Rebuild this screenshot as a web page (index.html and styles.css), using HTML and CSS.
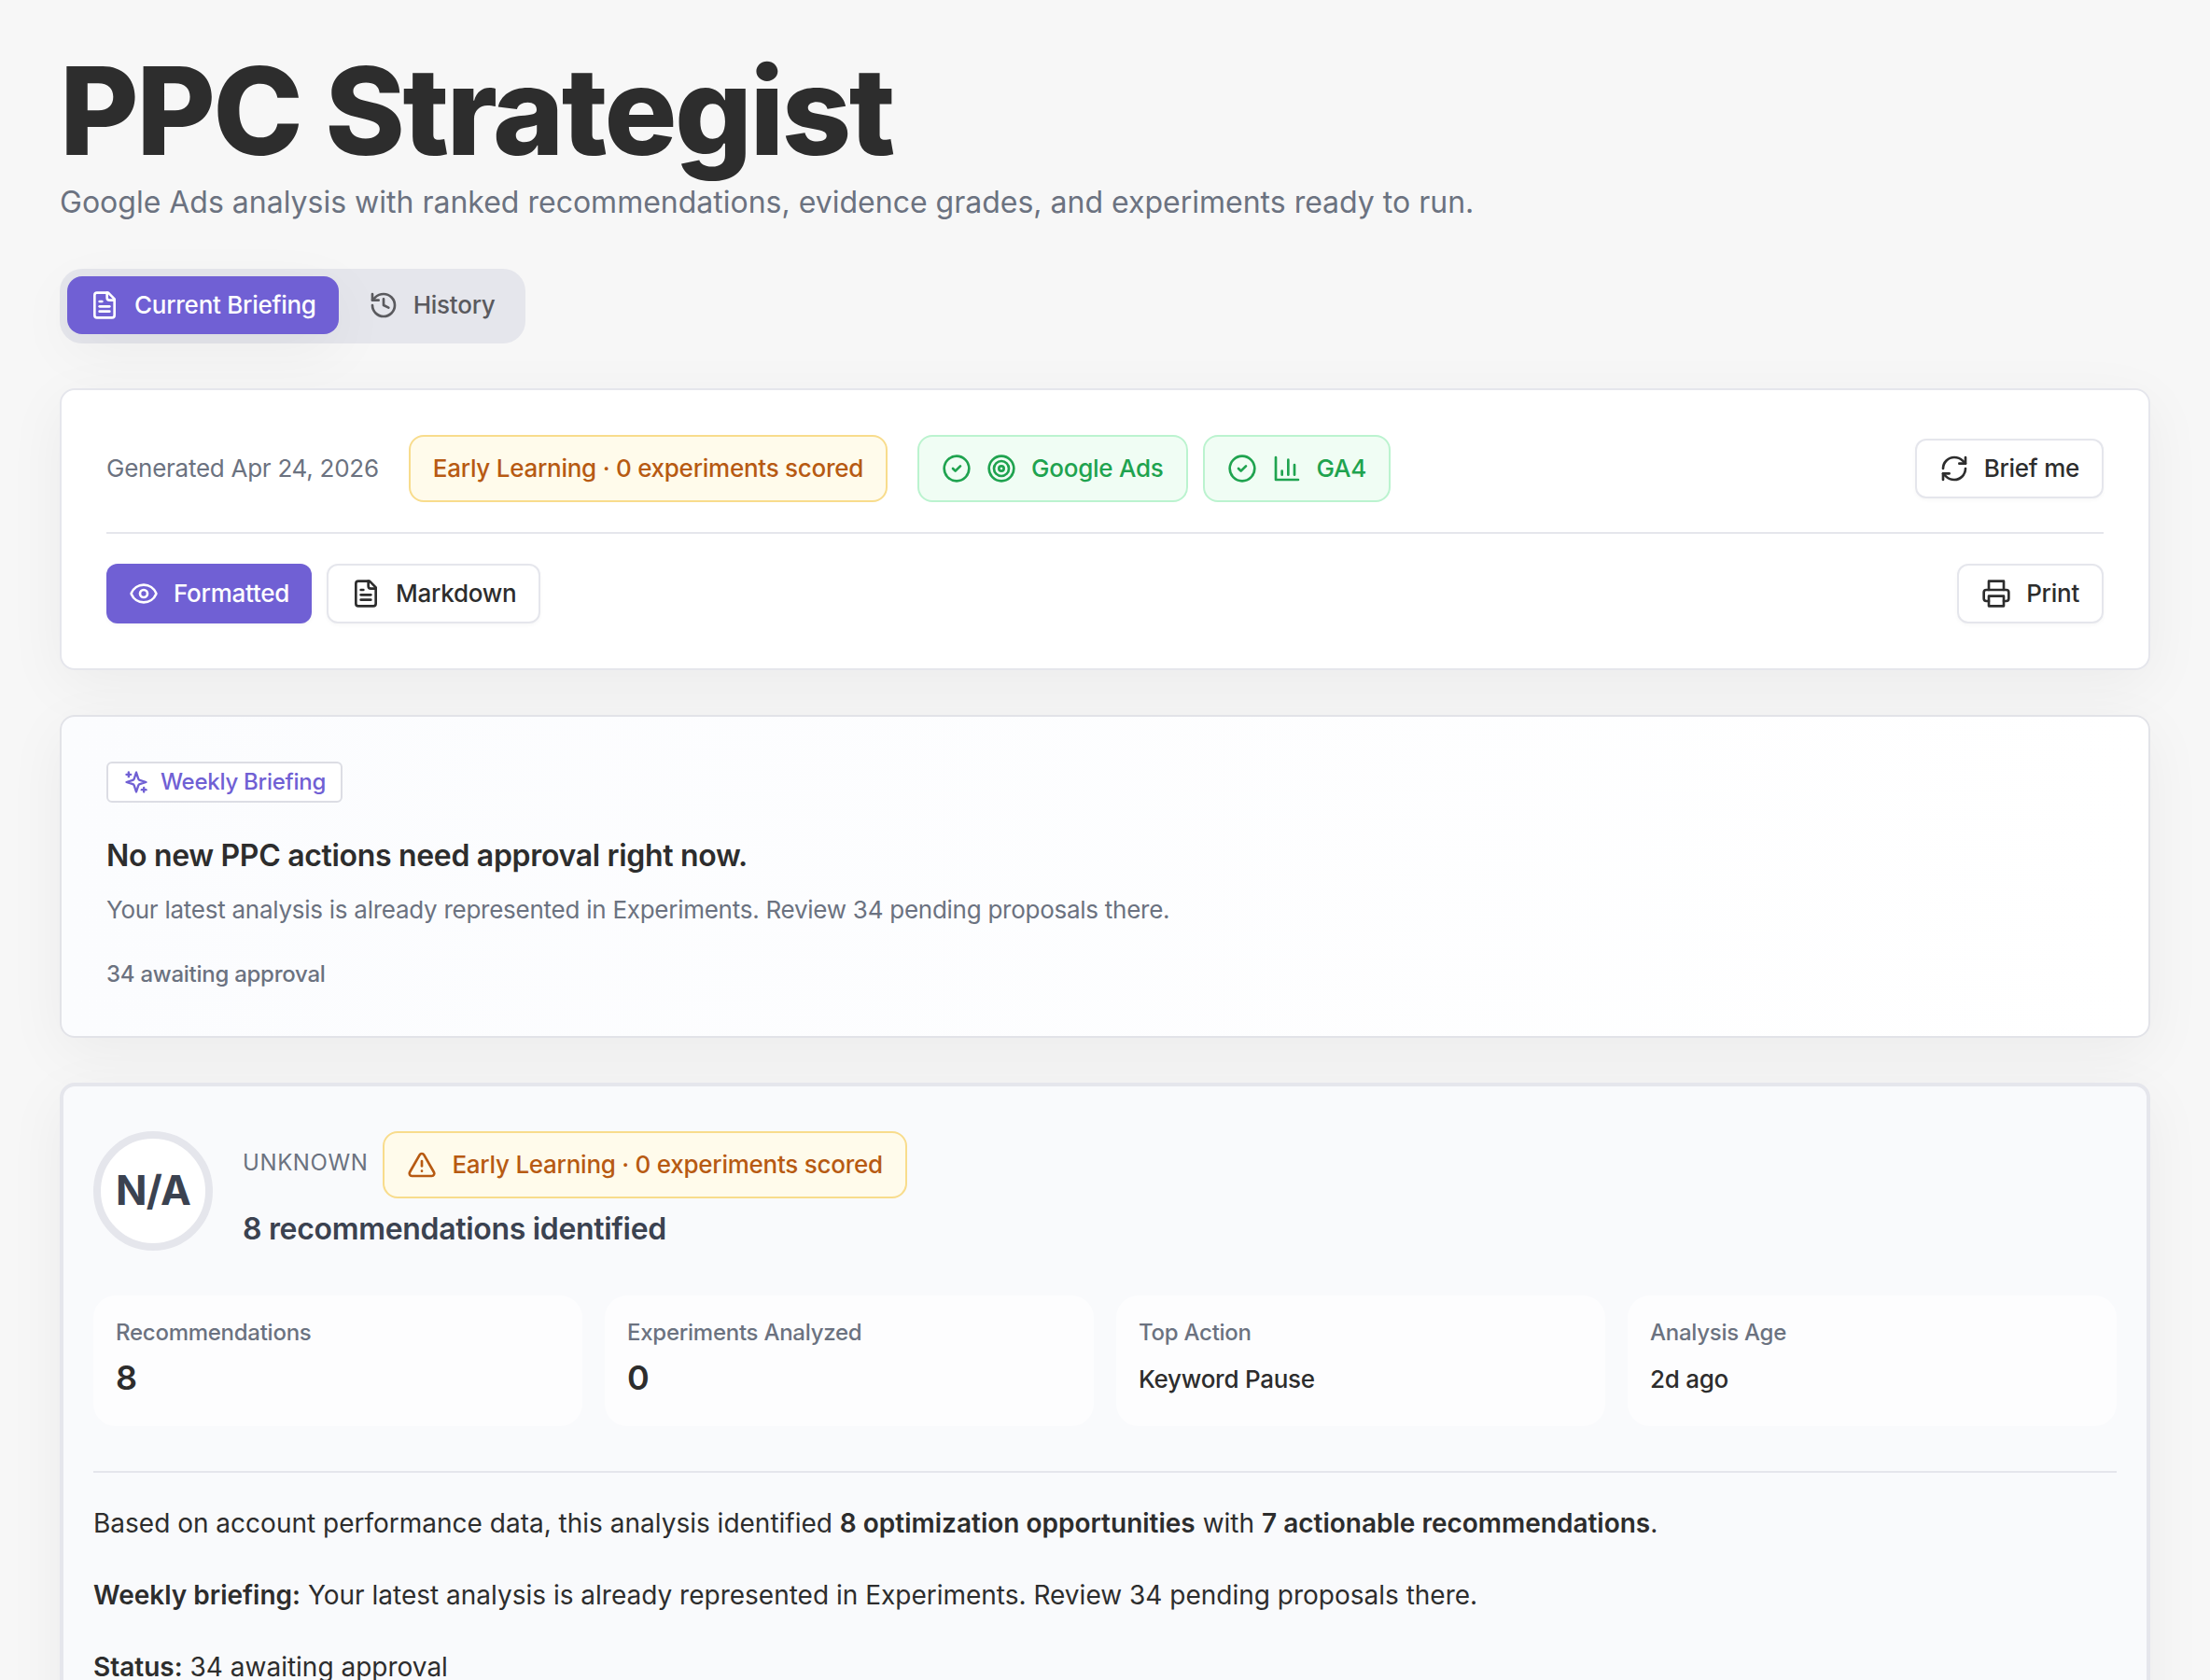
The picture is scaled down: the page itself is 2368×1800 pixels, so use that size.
FILE: index.html
```html
<!DOCTYPE html>
<html lang="en">
<head>
<meta charset="utf-8">
<meta name="viewport" content="width=device-width, initial-scale=1">
<title>PPC Strategist</title>
<link rel="stylesheet" href="styles.css">
</head>
<body>
<svg class="sprite" aria-hidden="true">
  <symbol id="i-file" viewBox="0 0 24 24"><path d="M15 2H6a2 2 0 0 0-2 2v16a2 2 0 0 0 2 2h12a2 2 0 0 0 2-2V7Z"/><path d="M14 2v4a2 2 0 0 0 2 2h4"/><path d="M10 9H8"/><path d="M16 13H8"/><path d="M16 17H8"/></symbol>
  <symbol id="i-history" viewBox="0 0 24 24"><path d="M3 12a9 9 0 1 0 9-9 9.75 9.75 0 0 0-6.74 2.74L3 8"/><path d="M3 3v5h5"/><path d="M12 7v5l4 2"/></symbol>
  <symbol id="i-check" viewBox="0 0 24 24"><circle cx="12" cy="12" r="10"/><path d="m9 12 2 2 4-4"/></symbol>
  <symbol id="i-target" viewBox="0 0 24 24"><circle cx="12" cy="12" r="10"/><circle cx="12" cy="12" r="6"/><circle cx="12" cy="12" r="2"/></symbol>
  <symbol id="i-chart" viewBox="0 0 24 24"><path d="M3 3v18h18"/><path d="M18 17V9"/><path d="M13 17V5"/><path d="M8 17v-3"/></symbol>
  <symbol id="i-refresh" viewBox="0 0 24 24"><path d="M3 12a9 9 0 0 1 9-9 9.75 9.75 0 0 1 6.74 2.74L21 8"/><path d="M21 3v5h-5"/><path d="M21 12a9 9 0 0 1-9 9 9.75 9.75 0 0 1-6.74-2.74L3 16"/><path d="M8 16H3v5"/></symbol>
  <symbol id="i-eye" viewBox="0 0 24 24"><path d="M2.062 12.348a1 1 0 0 1 0-.696 10.75 10.75 0 0 1 19.876 0 1 1 0 0 1 0 .696 10.75 10.75 0 0 1-19.876 0"/><circle cx="12" cy="12" r="3"/></symbol>
  <symbol id="i-print" viewBox="0 0 24 24"><path d="M6 18H4a2 2 0 0 1-2-2v-5a2 2 0 0 1 2-2h16a2 2 0 0 1 2 2v5a2 2 0 0 1-2 2h-2"/><path d="M6 9V2h12v7"/><path d="M6 14h12v8H6z"/></symbol>
  <symbol id="i-sparkles" viewBox="0 0 24 24"><path d="m12 3-1.912 5.813a2 2 0 0 1-1.275 1.275L3 12l5.813 1.912a2 2 0 0 1 1.275 1.275L12 21l1.912-5.813a2 2 0 0 1 1.275-1.275L21 12l-5.813-1.912a2 2 0 0 1-1.275-1.275L12 3Z"/><path d="M5 3v4"/><path d="M19 17v4"/><path d="M3 5h4"/><path d="M17 19h4"/></symbol>
  <symbol id="i-warning" viewBox="0 0 24 24"><path d="m21.73 18-8-14a2 2 0 0 0-3.48 0l-8 14A2 2 0 0 0 4 21h16a2 2 0 0 0 1.73-3"/><path d="M12 9v4"/><path d="M12 17h.01"/></symbol>
</svg>
<main class="page">
  <header class="page-header">
    <h1 class="title">PPC Strategist</h1>
    <p class="subtitle">Google Ads analysis with ranked recommendations, evidence grades, and experiments ready to run.</p>
  </header>

  <nav class="tabs" aria-label="Briefing views">
    <button class="tab tab-active" type="button"><svg class="icon"><use href="#i-file"/></svg>Current Briefing</button>
    <button class="tab" type="button"><svg class="icon"><use href="#i-history"/></svg>History</button>
  </nav>

  <section class="card">
    <div class="bar bar-top">
      <span class="generated">Generated Apr 24, 2026</span>
      <span class="badge badge-amber">Early Learning · 0 experiments scored</span>
      <div class="sources">
        <span class="badge badge-green"><svg class="icon"><use href="#i-check"/></svg><svg class="icon"><use href="#i-target"/></svg>Google Ads</span>
        <span class="badge badge-green"><svg class="icon"><use href="#i-check"/></svg><svg class="icon"><use href="#i-chart"/></svg>GA4</span>
      </div>
      <button class="btn push" type="button"><svg class="icon"><use href="#i-refresh"/></svg>Brief me</button>
    </div>
    <div class="bar bar-bottom">
      <button class="btn btn-primary" type="button"><svg class="icon"><use href="#i-eye"/></svg>Formatted</button>
      <button class="btn" type="button"><svg class="icon"><use href="#i-file"/></svg>Markdown</button>
      <button class="btn push" type="button"><svg class="icon"><use href="#i-print"/></svg>Print</button>
    </div>
  </section>

  <section class="card briefing">
    <span class="label"><svg class="icon icon-small"><use href="#i-sparkles"/></svg>Weekly Briefing</span>
    <h2 class="heading">No new PPC actions need approval right now.</h2>
    <p class="summary">Your latest analysis is already represented in Experiments. Review 34 pending proposals there.</p>
    <p class="awaiting">34 awaiting approval</p>
  </section>

  <section class="card report">
    <div class="grade-row">
      <div class="grade">N/A</div>
      <div class="grade-text">
        <div class="status-row">
          <span class="status">UNKNOWN</span>
          <span class="badge badge-amber"><svg class="icon"><use href="#i-warning"/></svg>Early Learning · 0 experiments scored</span>
        </div>
        <h2 class="heading heading-slate">8 recommendations identified</h2>
      </div>
    </div>
    <dl class="stats">
      <div class="stat"><dt class="stat-name">Recommendations</dt><dd class="stat-value">8</dd></div>
      <div class="stat"><dt class="stat-name">Experiments Analyzed</dt><dd class="stat-value">0</dd></div>
      <div class="stat"><dt class="stat-name">Top Action</dt><dd class="stat-value stat-words">Keyword Pause</dd></div>
      <div class="stat"><dt class="stat-name">Analysis Age</dt><dd class="stat-value stat-words">2d ago</dd></div>
    </dl>
    <div class="prose">
      <p>Based on account performance data, this analysis identified <strong>8 optimization opportunities</strong> with <strong>7 actionable recommendations</strong>.</p>
      <p><strong>Weekly briefing:</strong> Your latest analysis is already represented in Experiments. Review 34 pending proposals there.</p>
      <p><strong>Status:</strong> 34 awaiting approval</p>
    </div>
  </section>
</main>
</body>
</html>
```
FILE: styles.css
```css
:root {
  --ink: #2d2d2d;
  --muted: #6b7280;
  --slate: #3b4250;
  --line: #e5e6ec;
  --accent: #7060d4;
}

* { box-sizing: border-box; }

body {
  margin: 0;
  background: #f7f7f7;
  color: var(--ink);
  font-family: Inter, "Liberation Sans", sans-serif;
  font-size: 26px;
  line-height: 40px;
  letter-spacing: -0.01em;
}

h1, h2, p, dl, dd { margin: 0; }

.sprite { display: none; }

.icon {
  width: 32px;
  height: 32px;
  flex: none;
  fill: none;
  stroke: currentColor;
  stroke-width: 2;
  stroke-linecap: round;
  stroke-linejoin: round;
}

.icon-small { width: 28px; height: 28px; }

.page {
  display: flex;
  flex-direction: column;
  gap: 48px;
  padding: 48px 64px;
}

.title {
  font-size: 130px;
  font-weight: 800;
  line-height: 142px;
  letter-spacing: -0.02em;
}

.subtitle {
  margin-top: 4px;
  color: var(--muted);
  font-size: 32px;
  line-height: 46px;
  letter-spacing: normal;
}

.tabs {
  display: flex;
  align-self: flex-start;
  gap: 8px;
  padding: 8px 8px 10px;
  border-radius: 24px;
  background: var(--line);
}

.tab {
  display: flex;
  align-items: center;
  gap: 16px;
  height: 62px;
  padding: 0 24px;
  border: 0;
  border-radius: 16px;
  background: none;
  color: #5a5a5e;
  font: inherit;
  font-weight: 500;
  letter-spacing: inherit;
}

.tab-active {
  background: var(--accent);
  color: #fff;
  box-shadow: 0 16px 64px rgba(0, 0, 0, 0.05);
}

.card {
  padding: 48px;
  border: 2px solid var(--line);
  border-radius: 16px;
  background: #fff;
  box-shadow: 0 16px 64px rgba(0, 0, 0, 0.05);
}

.bar {
  display: flex;
  align-items: center;
}

.bar-top {
  gap: 32px;
  padding-bottom: 32px;
  border-bottom: 2px solid var(--line);
}

.bar-bottom { gap: 16px; padding-top: 32px; }

.push { margin-left: auto; }

.generated { color: var(--muted); }

.sources { display: flex; gap: 16px; }

.badge {
  display: flex;
  align-items: center;
  gap: 16px;
  height: 72px;
  padding: 0 24px;
  border: 2px solid;
  border-radius: 16px;
  font-weight: 500;
}

.badge-amber { background: #fffbeb; border-color: #f8dc8c; color: #b75a12; }
.badge-green { background: #f0fdf4; border-color: #bbf3cf; color: #1fa34f; }

.btn {
  display: flex;
  align-items: center;
  gap: 16px;
  height: 64px;
  padding: 0 24px;
  border: 2px solid var(--line);
  border-radius: 12px;
  background: #fff;
  color: var(--ink);
  font: inherit;
  font-weight: 500;
  letter-spacing: inherit;
  box-shadow: 0 2px 4px rgba(0, 0, 0, 0.03);
}

.btn-primary {
  border: 0;
  background: var(--accent);
  color: #fff;
}

.briefing {
  display: flex;
  flex-direction: column;
  align-items: flex-start;
  border-color: #e2e3e8;
  background: linear-gradient(90deg, #fbfcfe, #fff);
}

.label {
  display: flex;
  align-items: center;
  gap: 12px;
  height: 44px;
  padding: 0 16px;
  border: 2px solid #dcdde4;
  border-radius: 6px;
  background: #fff;
  color: var(--accent);
  font-size: 24px;
  font-weight: 500;
}

.heading {
  font-size: 32px;
  font-weight: 600;
  line-height: 46px;
  letter-spacing: -0.01em;
}

.heading-slate { color: var(--slate); }

.briefing .heading { margin-top: 34px; }

.summary {
  margin-top: 12px;
  color: var(--muted);
  line-height: 46px;
}

.awaiting {
  margin-top: 28px;
  color: var(--muted);
  font-size: 24px;
  font-weight: 500;
  line-height: 36px;
}

.report {
  padding: 48px 32px;
  border-width: 4px;
  background: #f9fafc;
}

.grade-row {
  display: flex;
  align-items: center;
  gap: 32px;
}

.grade {
  display: flex;
  align-items: center;
  justify-content: center;
  width: 128px;
  height: 128px;
  padding-bottom: 2px;
  border: 8px solid var(--line);
  border-radius: 50%;
  background: #fff;
  color: var(--slate);
  font-size: 44px;
  font-weight: 700;
  letter-spacing: -0.02em;
}

.grade-text {
  display: flex;
  flex-direction: column;
  gap: 10px;
}

.status-row {
  display: flex;
  align-items: center;
  gap: 16px;
}

.status {
  padding-bottom: 4px;
  color: var(--muted);
  font-size: 24px;
  letter-spacing: 0.025em;
}

.stats {
  display: grid;
  grid-template-columns: repeat(4, 1fr);
  gap: 24px;
  margin-top: 48px;
}

.stat {
  padding: 24px 24px 20px;
  border-radius: 24px;
  background: #fdfdfe;
}

.stat-name {
  color: var(--muted);
  font-size: 24px;
  font-weight: 500;
  line-height: 32px;
}

.stat-value {
  margin-top: 4px;
  font-size: 36px;
  font-weight: 600;
  line-height: 56px;
}

.stat-words {
  font-size: 26px;
  font-weight: 500;
  line-height: 60px;
}

.prose {
  display: flex;
  flex-direction: column;
  gap: 32px;
  margin-top: 48px;
  padding-top: 32px;
  border-top: 2px solid var(--line);
  font-size: 28px;
  line-height: 45px;
  letter-spacing: normal;
}

.prose strong { font-weight: 600; }
```
